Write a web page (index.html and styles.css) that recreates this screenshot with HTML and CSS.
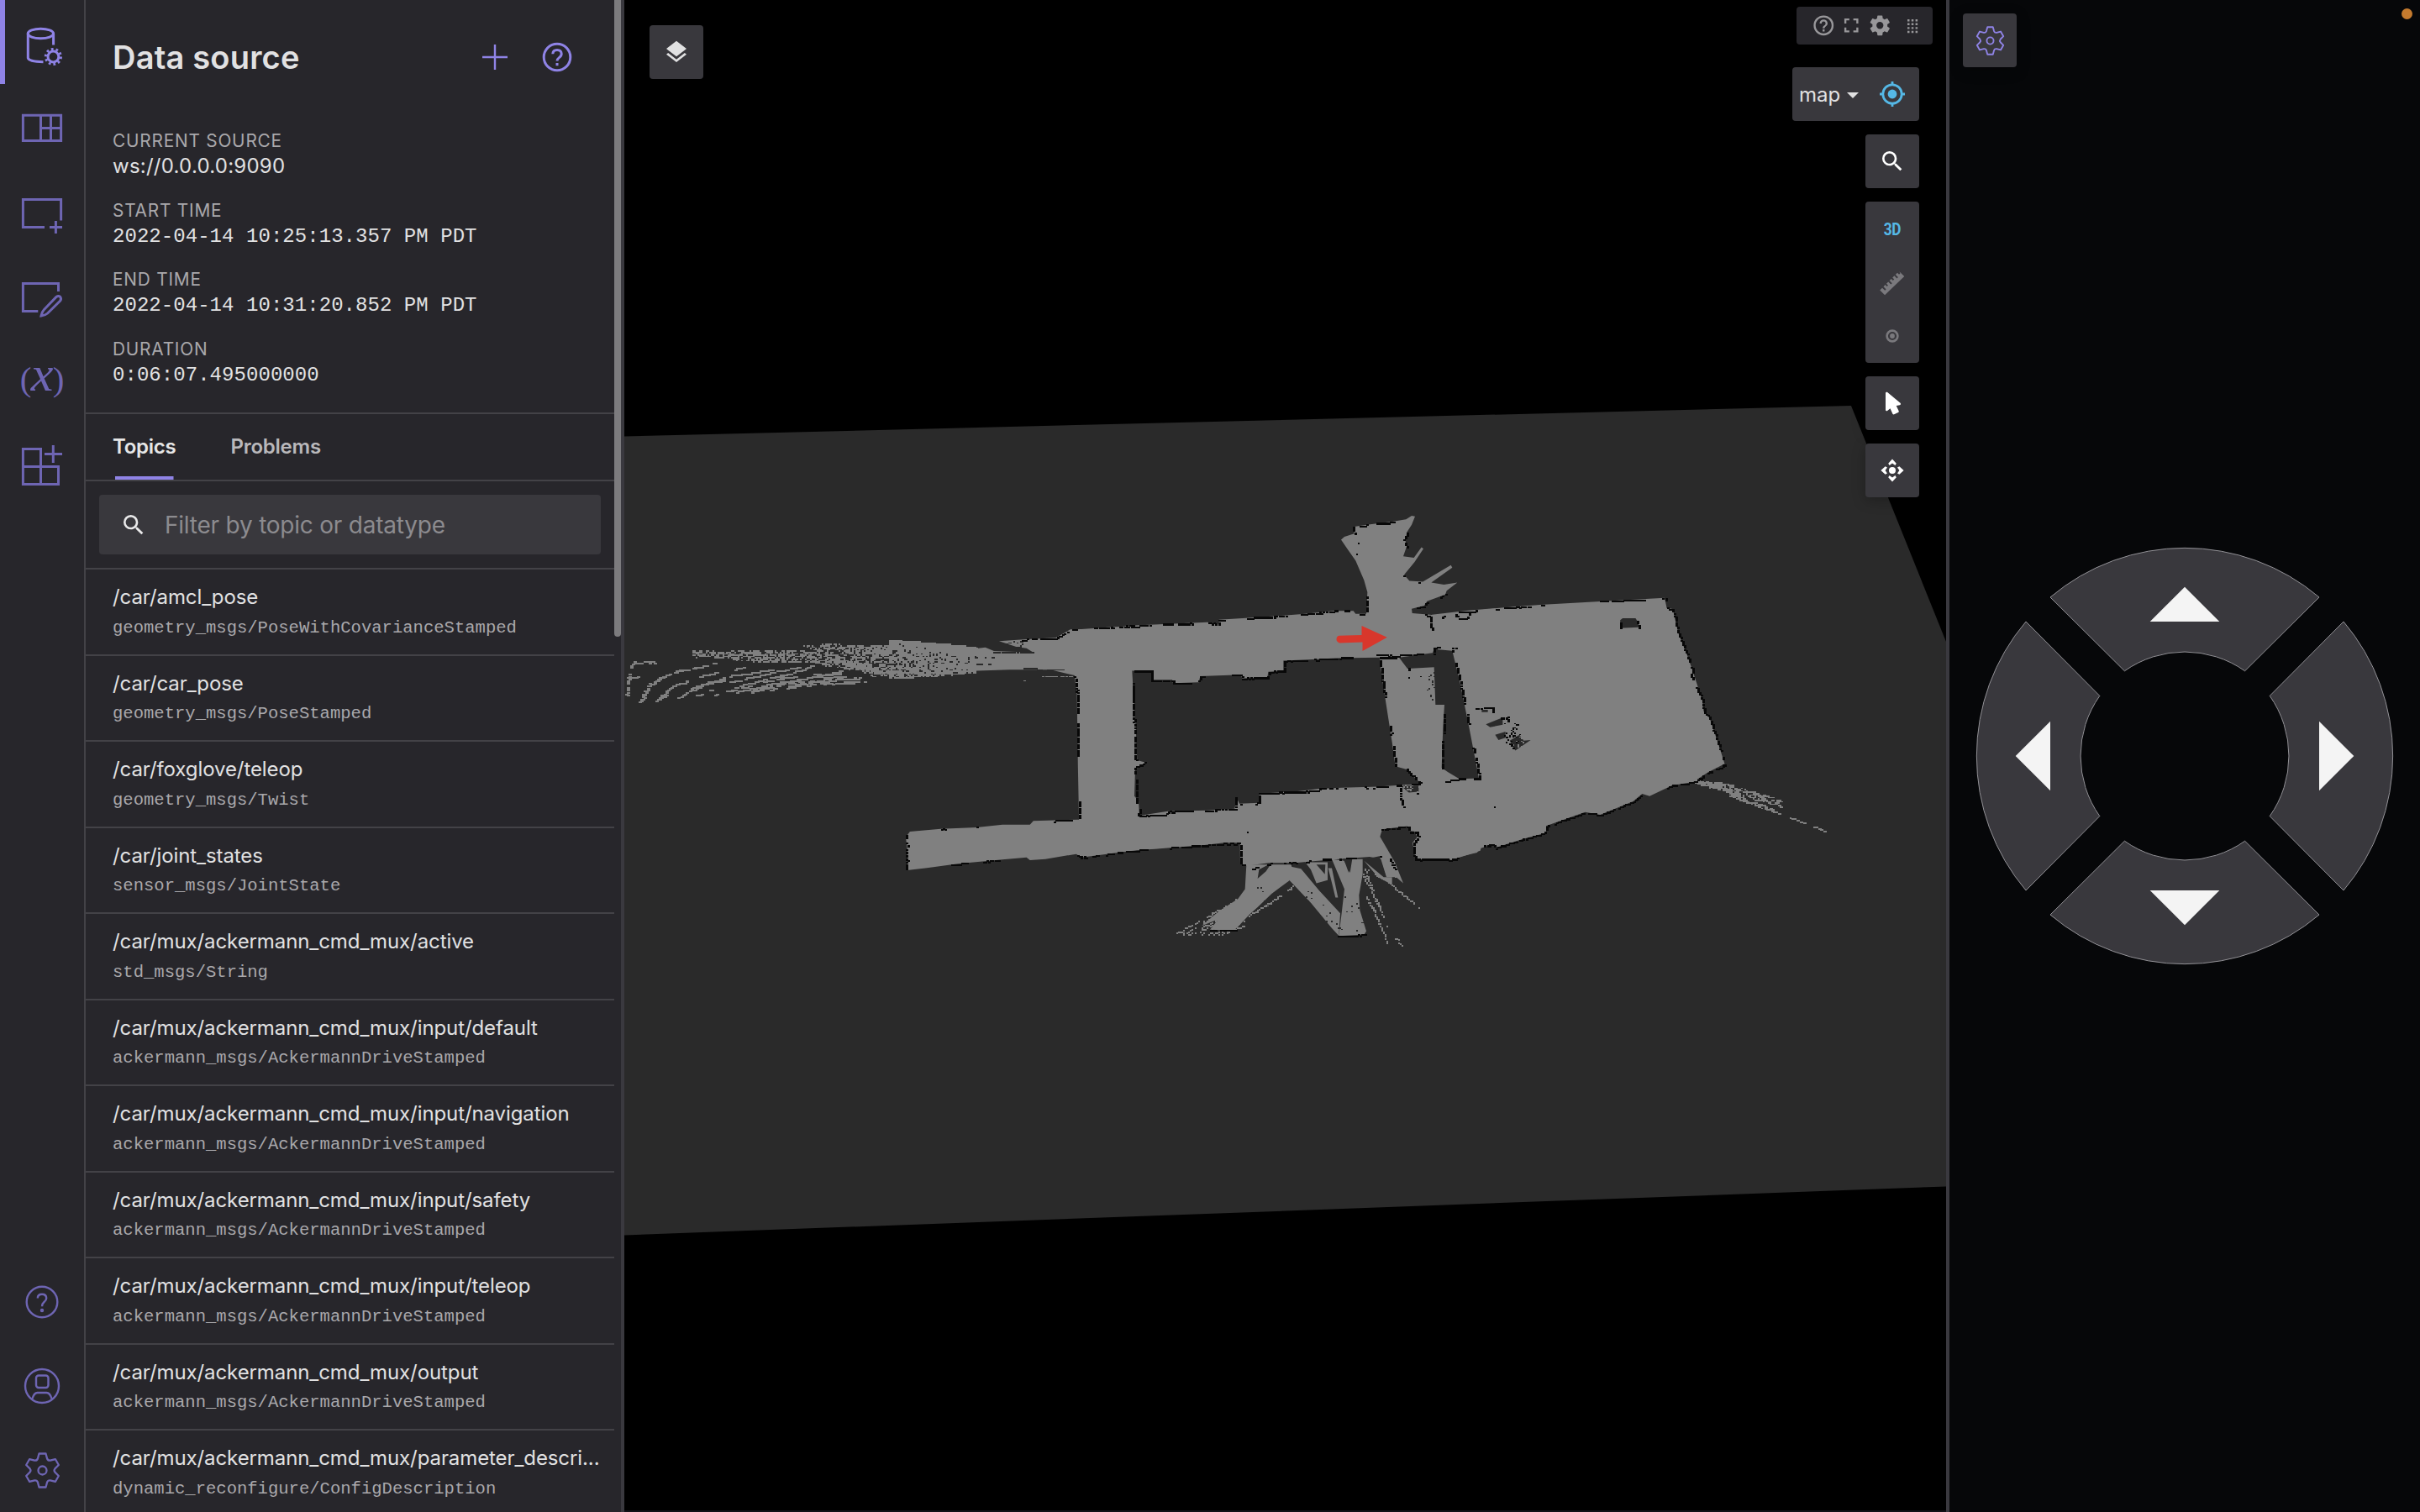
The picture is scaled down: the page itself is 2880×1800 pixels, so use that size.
FILE: index.html
```html
<!DOCTYPE html>
<html lang="en">
<head>
<meta charset="utf-8">
<title>Data source</title>
<link rel="stylesheet" href="styles.css">
</head>
<body>
<svg width="0" height="0" class="defs">
  <defs>
    <symbol id="i-gear" viewBox="-21.5 -21.5 43 43"><path fill="none" stroke="currentColor" stroke-width="2.3" stroke-linejoin="round" d="M-4-20H4L5.6-14Q6.6-11.4 9.32-11.85L15.32-13.46L19.32-6.54L14.92-2.15Q13.2 0 14.92 2.15L19.32 6.54L15.32 13.46L9.32 11.85Q6.6 11.4 5.6 14L4 20H-4L-5.6 14Q-6.6 11.4-9.32 11.85L-15.32 13.46L-19.32 6.54L-14.92 2.15Q-13.2 0-14.92-2.15L-19.32-6.54L-15.32-13.46L-9.32-11.85Q-6.6-11.4-5.6-14Z"/><circle r="5" fill="none" stroke="currentColor" stroke-width="2.3"/></symbol>
    <symbol id="i-search" viewBox="0 0 24 24"><path fill="currentColor" d="M9.5,3A6.5,6.5 0 0,1 16,9.5C16,11.11 15.41,12.59 14.44,13.73L14.71,14H15.5L20.5,19L19,20.5L14,15.5V14.71L13.73,14.44C12.59,15.41 11.11,16 9.5,16A6.5,6.5 0 0,1 3,9.5A6.5,6.5 0 0,1 9.5,3M9.5,5C7,5 5,7 5,9.5C5,12 7,14 9.5,14C12,14 14,12 14,9.5C14,7 12,5 9.5,5Z"/></symbol>
    <symbol id="i-help" viewBox="0 0 24 24"><path fill="currentColor" d="M11,18H13V16H11V18M12,2A10,10 0 0,0 2,12A10,10 0 0,0 12,22A10,10 0 0,0 22,12A10,10 0 0,0 12,2M12,20C7.59,20 4,16.41 4,12C4,7.59 7.59,4 12,4C16.41,4 20,7.59 20,12C20,16.41 16.41,20 12,20M12,6A4,4 0 0,0 8,10H10A2,2 0 0,1 12,8A2,2 0 0,1 14,10C14,12 11,11.75 11,15H13C13,12.75 16,12.5 16,10A4,4 0 0,0 12,6Z"/></symbol>
  </defs>
</svg>
<div class="app">
  <nav class="rail">
    <div class="rail-group">
      <a class="rail-item active"><svg viewBox="0 0 100 100"><ellipse cx="48.4" cy="40" rx="15.2" ry="5.7"/><path d="M33.3 40V69Q34.5 73.3 51.5 73.7M63.6 40V53.5"/><circle cx="63.4" cy="67.5" r="6.4"/><circle cx="63.4" cy="67.5" r="9.1" stroke-dasharray="2.7 3.02"/></svg></a>
      <a class="rail-item"><svg viewBox="0 0 100 100"><path d="M27.4 37.3H72.6V67.6H27.4ZM48.5 37.3V67.6M60.5 37.3V67.6M48.5 52.5H72.6"/></svg></a>
      <a class="rail-item"><svg viewBox="0 0 100 100"><path d="M72.6 62.5V37.4H27.4V70.4H53M66.4 63V78M59 70.4H74"/></svg></a>
      <a class="rail-item"><svg viewBox="0 0 100 100"><path d="M69.5 47V37.4H27.4V70.4H45.3M49 76Q50 71 52.3 68.7L67 53.5Q69.5 51.6 71.8 53.5Q73.4 56 71.5 58.3L56.6 73Q54 75.3 49 76Z"/></svg></a>
      <a class="rail-item fx"><span class="paren">(</span><span class="ex">x</span><span class="paren">)</span></a>
      <a class="rail-item"><svg viewBox="0 0 100 100"><path d="M27.4 34.5H48.5V55.5H69.5V76.6H27.4ZM27.4 55.5H48.5V76.6M63.3 30V51M53 40.5H74"/></svg></a>
    </div>
    <div class="rail-group">
      <a class="rail-item thin"><svg viewBox="0 0 100 100"><circle cx="50" cy="50" r="18.3"/><path d="M44.8 45.5Q44.8 40.8 50 40.8Q55.2 40.8 55.2 45.5Q55.2 48 52.3 50.3Q50 52.2 50 55.2"/><circle cx="50" cy="60" r="1" /></svg></a>
      <a class="rail-item thin"><svg viewBox="0 0 100 100"><circle cx="50" cy="50" r="20"/><rect x="43" y="37.5" width="14.5" height="14.5" rx="3"/><path d="M38.3 65.5Q40.5 58 44.5 58H55.5Q59.5 58 61.7 65.5"/></svg></a>
      <a class="rail-item"><svg class="gear"><use href="#i-gear"/></svg></a>
    </div>
  </nav>

  <aside class="sidebar">
    <div class="sidebar-body">
      <header class="head">
        <h1>Data source</h1>
        <svg class="plus" viewBox="0 0 32 32"><path d="M16 1V31M1 16H31"/></svg>
        <svg class="info" viewBox="0 0 36 36"><circle cx="18" cy="18" r="15.8"/><path d="M12.8 14.2Q13 9.4 18 9.4Q23 9.4 23.2 14Q23.2 16.6 20.4 18.6Q18 20.4 18 22.5"/><path d="M18 25V28.2"/></svg>
      </header>
      <dl class="facts">
        <div><dt>Current source</dt><dd class="sans">ws://0.0.0.0:9090</dd></div>
        <div><dt>Start time</dt><dd>2022-04-14 10:25:13.357 PM PDT</dd></div>
        <div><dt>End time</dt><dd>2022-04-14 10:31:20.852 PM PDT</dd></div>
        <div><dt>Duration</dt><dd>0:06:07.495000000</dd></div>
      </dl>
      <div class="tabs"><span class="tab on">Topics</span><span class="tab">Problems</span></div>
      <div class="filter"><div class="field"><svg><use href="#i-search"/></svg><span>Filter by topic or datatype</span></div></div>
      <ul class="topics">
        <li><b>/car/amcl_pose</b><i>geometry_msgs/PoseWithCovarianceStamped</i></li>
        <li><b>/car/car_pose</b><i>geometry_msgs/PoseStamped</i></li>
        <li><b>/car/foxglove/teleop</b><i>geometry_msgs/Twist</i></li>
        <li><b>/car/joint_states</b><i>sensor_msgs/JointState</i></li>
        <li><b>/car/mux/ackermann_cmd_mux/active</b><i>std_msgs/String</i></li>
        <li><b>/car/mux/ackermann_cmd_mux/input/default</b><i>ackermann_msgs/AckermannDriveStamped</i></li>
        <li><b>/car/mux/ackermann_cmd_mux/input/navigation</b><i>ackermann_msgs/AckermannDriveStamped</i></li>
        <li><b>/car/mux/ackermann_cmd_mux/input/safety</b><i>ackermann_msgs/AckermannDriveStamped</i></li>
        <li><b>/car/mux/ackermann_cmd_mux/input/teleop</b><i>ackermann_msgs/AckermannDriveStamped</i></li>
        <li><b>/car/mux/ackermann_cmd_mux/output</b><i>ackermann_msgs/AckermannDriveStamped</i></li>
        <li><b>/car/mux/ackermann_cmd_mux/parameter_descri...</b><i>dynamic_reconfigure/ConfigDescription</i></li>
      </ul>
    </div>
    <div class="scroll"><div class="thumb"></div></div>
  </aside>

  <main class="scene">
    <svg class="world" viewBox="743 0 1573 1800">
      <path fill="#2a2a2a" d="M743 519.5L2203 483L2316 764V1412.5L743 1470.5Z"/>
      <g fill="#808080">
        <path transform="translate(740 680) scale(.40816 .33333)" d="M1020 278L1060 272 1085 285 1200 290 1180 275 1150 270 1100 250 1180 243 1265 238 1308 208 1340 207 1418 200 1490 196 1568 192V388H1545V355H1490L1492 540 1497 680 1525 683 1515 693 1495 700 1500 820 1507 875 1568 870V990L1520 993 1460 1003 1340 1022 1325 1010 1235 1028 1190 1032 1180 1022 1110 1030 980 1045 890 1060 832 1068V990L828 950 840 930 930 920 1035 915 1110 905 1190 905 1200 892 1333 887 1330 700 1327 440 1320 372 1250 352 1130 352 1020 356Z"/>
        <path transform="translate(1340 580) scale(.33333 .35714)" d="M-4 464L0 462 290 450 330 455 332 442 500 432 640 422 740 412 812 412 820 422H858L862 350 850 310 820 245 790 205 768 175 780 165 815 155 810 132 860 125 950 115 1000 107 1020 95 1032 97 1020 125 1003 150 998 180 1003 195 990 230 1028 235 1055 200 1062 205 1030 250 993 292 1012 312 1060 315 1160 260 1165 268 1090 318 1135 325 1183 318 1145 345 1140 358 1075 380 1065 395 1020 405 1022 420 1085 425 1120 430 1220 415 1280 408 1380 400 1500 393V1152L1420 1172 1320 1200 1310 1190 1270 1195 1265 1212 1160 1243 1145 1235 1035 1241 1025 1190 1042 1165 1035 1148 1010 1145 1005 1130 915 1140 907 1165 960 1250 990 1320 965 1300 930 1300 910 1240 870 1232 760 1240 650 1248 605 1252 510 1252 430 1262 408 1255 407 1185H350L280 1193 120 1205 -4 1213Z"/>
        <path transform="translate(1640 580) scale(.35714 .33333)" d="M180 455L300 440 540 420 740 408 955 395 962 432 982 435 1000 520 1030 600 1048 655 1080 760 1085 800 1105 825 1135 920 1155 988 1100 1018 1050 1053 980 1065 905 1103 880 1095 850 1122 740 1170 690 1160 560 1210 555 1230 400 1285 385 1275 340 1290 330 1305 240 1328 125 1328 115 1270 130 1250 120 1225 100 1150V500Z"/>
        <g transform="translate(1340 580) scale(.33333 .35714)">
          <path d="M430 1258H590L600 1300 520 1355 470 1400 440 1425 400 1465 385 1478 300 1475 330 1440 270 1462 330 1415 400 1372 425 1340Z"/>
          <path d="M575 1262L625 1272 690 1345 765 1420 760 1495 735 1470 660 1385 585 1312Z"/>
          <path d="M735 1240L780 1245 795 1285 805 1240H845V1290L832 1360 835 1410 858 1480 850 1492 760 1496 770 1420 780 1340Z"/>
          <path d="M640 1250H720V1310L680 1320 660 1275Z"/>
          <path d="M722 1270L735 1270 757 1368H748Z"/>
          <path d="M850 1245L920 1300 950 1300V1325L900 1300Z"/>
        </g>
      </g>
      <g fill="#2a2a2a">
        <g transform="translate(1340 580) scale(.33333 .35714)">
          <path d="M22 612H90L92 642H165L168 653 260 650 265 630 410 625 415 637 505 634 508 615 562 612V578L650 575 750 570 905 568 915 640 935 760 950 850 962 930 1000 940 1050 985 1045 990 975 993 900 998 770 1002 690 1005 600 1015 475 1021V1052L405 1055 395 1035 388 1072 290 1077 150 1080 48 1095 45 1045 30 1030 33 940 70 918 40 910 35 800 27 700Z"/>
          <path d="M975 568L1095 552 1100 540 1165 545 1190 640 1225 800 1260 970 1190 972 1150 950 1127 935 1132 800 1137 725H1105L1100 600 1005 605Z"/>
          <path d="M980 995H1045V1015L1010 1018Z"/>
          <path d="M1285 790L1345 768V792L1300 800ZM1318 825L1355 815V835L1330 843ZM1370 845L1405 825 1420 845 1445 843 1390 878ZM1270 742H1292V750H1270Z"/>
          <path d="M475 1275L520 1252 500 1280 470 1305ZM580 1252H610L595 1262ZM680 1258H712L710 1290ZM775 1238H808L800 1285ZM862 1238L905 1230 925 1290 890 1275Z"/>
        </g>
        <path transform="translate(1640 580) scale(.35714 .33333)" d="M807 475L815 468H858L868 485V500L807 503Z"/>
      </g>
      <path id="free" fill="#808080" shape-rendering="crispEdges"/>
      <path id="unknown" fill="#2a2a2a" shape-rendering="crispEdges"/>
      <path id="wall" fill="#080808" shape-rendering="crispEdges"/>
      <path fill="#d8372c" d="M1593.5 756.8L1620.5 756V745L1650.8 758.8L1621.5 775V764.5L1594 765.4Q1590.5 764.5 1590.5 761Q1590.5 757.5 1593.5 756.8Z"/>
    </svg>

    <div class="layers"><svg viewBox="0 0 24 24"><path fill="currentColor" d="M12,16L19.36,10.27L21,9L12,2L3,9L4.63,10.27M12,18.54L4.62,12.81L3,14.07L12,21.07L21,14.07L19.37,12.8L12,18.54Z"/></svg></div>

    <div class="overlay">
      <div class="bar">
        <svg><use href="#i-help"/></svg>
        <svg viewBox="0 0 24 24"><path fill="currentColor" d="M5,5H10V7H7V10H5V5M14,5H19V10H17V7H14V5M17,14H19V19H14V17H17V14M10,17V19H5V14H7V17H10Z"/></svg>
        <svg viewBox="0 0 24 24"><path fill="currentColor" d="M12,15.5A3.5,3.5 0 0,1 8.5,12A3.5,3.5 0 0,1 12,8.5A3.5,3.5 0 0,1 15.5,12A3.5,3.5 0 0,1 12,15.5M19.43,12.97C19.47,12.65 19.5,12.33 19.5,12C19.5,11.67 19.47,11.34 19.43,11L21.54,9.37C21.73,9.22 21.78,8.95 21.66,8.73L19.66,5.27C19.54,5.05 19.27,4.96 19.05,5.05L16.56,6.05C16.04,5.66 15.5,5.32 14.87,5.07L14.5,2.42C14.46,2.18 14.25,2 14,2H10C9.75,2 9.54,2.18 9.5,2.42L9.13,5.07C8.5,5.32 7.96,5.66 7.44,6.05L4.95,5.05C4.73,4.96 4.46,5.05 4.34,5.27L2.34,8.73C2.21,8.95 2.27,9.22 2.46,9.37L4.57,11C4.53,11.34 4.5,11.67 4.5,12C4.5,12.33 4.53,12.65 4.57,12.97L2.46,14.63C2.27,14.78 2.21,15.05 2.34,15.27L4.34,18.73C4.46,18.95 4.73,19.03 4.95,18.95L7.44,17.94C7.96,18.34 8.5,18.68 9.13,18.93L9.5,21.58C9.54,21.82 9.75,22 10,22H14C14.25,22 14.46,21.82 14.5,21.58L14.87,18.93C15.5,18.67 16.04,18.34 16.56,17.94L19.05,18.95C19.27,19.03 19.54,18.95 19.66,18.73L21.66,15.27C21.78,15.05 21.73,14.78 21.54,14.63L19.43,12.97Z"/></svg>
        <svg class="grip" viewBox="0 0 13 18"><path stroke="currentColor" stroke-width="2.4" stroke-dasharray="2.5 2.3" d="M0 2.2H13M0 6.8H13M0 11.4H13M0 16H13"/></svg>
      </div>
      <div class="frame"><span>map</span><svg class="caret" viewBox="0 0 14 7"><path fill="currentColor" d="M0 0H14L7 7Z"/></svg><svg class="aim" viewBox="-16 -16 32 32"><g fill="none" stroke="currentColor" stroke-width="2.8"><circle r="11.2"/><path d="M0-15V-11M0 11V15M-15 0H-11M11 0H15"/></g><circle r="5.4" fill="currentColor"/></svg></div>
      <div class="tool"><svg><use href="#i-search"/></svg></div>
      <div class="tool stack">
        <span class="cell three">3D</span>
        <span class="cell"><svg viewBox="0 0 32 32"><path fill="currentColor" d="M1.2 24.5L4 21.7 7.2 24.8 8.6 23.4 5.5 20.2 7.6 18.1 9.6 20.1 11 18.7 9 16.7 11.2 14.5 14.3 17.6 15.7 16.2 12.6 13.1 14.8 10.9 16.8 12.9 18.2 11.5 16.2 9.5 18.4 7.3 21.5 10.4 22.9 9 19.8 5.9 22 3.8 24 5.8 25.4 4.4 24.4 2.2 30.3 8.1 7.1 30.3Z"/></svg></span>
        <span class="cell"><svg viewBox="0 0 32 32"><circle cx="16" cy="16" r="6.4" fill="none" stroke="currentColor" stroke-width="2.6"/><circle cx="16" cy="16" r="2.9" fill="currentColor"/></svg></span>
      </div>
      <div class="tool"><svg viewBox="0 0 24 24"><path fill="currentColor" d="M13.64,21.97C13.14,22.21 12.54,22 12.31,21.5L10.13,16.76L7.62,18.78C7.45,18.92 7.24,19 7,19A1,1 0 0,1 6,18V3A1,1 0 0,1 7,2C7.24,2 7.47,2.09 7.64,2.23L7.65,2.22L19.14,11.86C19.57,12.22 19.62,12.85 19.27,13.27C19.12,13.45 18.91,13.57 18.7,13.61L15.54,14.23L17.74,18.96C18,19.46 17.76,20.05 17.26,20.28L13.64,21.97Z"/></svg></div>
      <div class="tool"><svg viewBox="-16 -16 32 32"><circle r="4" fill="currentColor"/><path fill="currentColor" d="M0-13.4L4.8-8.2 3.4-6 0-8.4-3.4-6-4.8-8.2ZM0 13.4L4.8 8.2 3.4 6 0 8.4-3.4 6-4.8 8.2ZM-13.6 0L-8.4-4.8-6-3.4-8.4 0-6 3.4-8.4 4.8ZM13.6 0L8.4-4.8 6-3.4 8.4 0 6 3.4 8.4 4.8Z"/></svg></div>
    </div>
  </main>

  <section class="teleop">
    <div class="tool prefs"><svg><use href="#i-gear"/></svg></div>
    <div class="dot"></div>
    <svg class="pad" viewBox="-280 -280 560 560">
      <g id="up"><path fill="#39383d" stroke="#929196" d="M-160-189A247.6 247.6 0 0 1 160-189L71.6-101.2A124 124 0 0 0-71.6-101.2Z"/><path fill="#f4f4f4" d="M0-201.3L41.3-160H-41.3Z"/></g>
      <use href="#up" transform="rotate(90)"/><use href="#up" transform="rotate(180)"/><use href="#up" transform="rotate(270)"/>
    </svg>
  </section>
</div>
<script src="map.js"></script>
</body>
</html>
```
FILE: styles.css
```css
* { box-sizing: border-box; }
body { margin: 0; background: #000; font-family: Inter, "Liberation Sans", sans-serif; color: #e1e1e2; overflow: hidden; }
.defs { position: absolute; }
.app { display: flex; width: 2880px; height: 1800px; }

.rail { width: 102px; display: flex; flex-direction: column; justify-content: space-between; background: #27262b; border-right: 2px solid #434247; color: #6e65b3; }
.rail-item { display: flex; align-items: center; justify-content: center; width: 100px; height: 100px; }
.rail-item svg { width: 100px; height: 100px; fill: none; stroke: currentColor; stroke-width: 3; }
.rail-item.thin svg { stroke-width: 2.4; }
.rail-item svg.gear { width: 43px; height: 43px; stroke: none; }
.rail-item.active { color: #8f83e6; box-shadow: inset 6px 0 #8f83e6; }
.fx { font-family: "Liberation Serif", serif; line-height: 1; padding-top: 2px; }
.fx .paren { font-size: 41px; width: 9px; display: flex; justify-content: center; }
.fx .ex { font-size: 60px; font-style: italic; width: 30px; text-align: center; padding-bottom: 13px; }

.sidebar { width: 637px; display: flex; background: #27262b; }
.sidebar-body { width: 629px; height: 1798px; overflow: hidden; }
.scroll { width: 8px; height: 1800px; }
.thumb { height: 758px; border-radius: 0 0 4px 4px; background: #7c7b7e; }
.head { height: 153px; padding: 44px 50px 0 32px; display: flex; align-items: flex-start; color: #8f83e6; }
.head h1 { margin: 0; flex: 1; font-size: 38px; line-height: 48px; font-weight: 600; color: #e1e1e2; letter-spacing: .2px; }
.head svg { fill: none; stroke: currentColor; }
.plus { width: 32px; height: 32px; stroke-width: 2.4; margin: 8px 40px 0 0; }
.info { width: 36px; height: 36px; stroke-width: 3; margin-top: 6px; }
.facts { margin: 0; padding: 0 32px; height: 338px; }
.facts div { height: 82.6px; }
dt { font-size: 20.8px; line-height: 30px; letter-spacing: .8px; text-transform: uppercase; color: #a9a8ab; }
dd { margin: 0; font: 24px/32px "Liberation Mono", monospace; letter-spacing: .05px; }
dd.sans { font-family: Inter, sans-serif; line-height: 30px; letter-spacing: .25px; }
.tabs { height: 82px; border-top: 2px solid #434247; border-bottom: 2px solid #434247; padding: 0 32px; display: flex; gap: 65px; font-size: 24px; font-weight: 600; line-height: 78px; letter-spacing: -.25px; color: #b9b8bb; }
.tab.on { color: #e6e6e7; background: linear-gradient(#8f83e6, #8f83e6) 2.5px 100% / 69.5px 4px no-repeat; }
.filter { height: 105px; padding: 16px; border-bottom: 2px solid #434247; }
.field { height: 71px; background: #39383d; border-radius: 4px; display: flex; align-items: center; padding-left: 24.5px; gap: 21.5px; font-size: 28px; letter-spacing: -.22px; color: #8c8b8f; }
.field svg { width: 32px; height: 32px; color: #e9e9ea; }
.topics { margin: 0; padding: 0; list-style: none; }
.topics li { height: 102.5px; padding: 17px 16px 0 32px; border-bottom: 2px solid #434247; }
.topics b, .topics i { display: block; font-weight: 400; font-style: normal; white-space: nowrap; }
.topics b { font-size: 24px; line-height: 32px; letter-spacing: -.09px; }
.topics i { font: 20.55px/30px "Liberation Mono", monospace; color: #a9a8ab; margin-top: 5.5px; }

.scene { width: 1581px; position: relative; background: #000; border: solid #3a393f; border-width: 0 4px; }
.scene::after { content: ""; position: absolute; left: 0; right: 0; bottom: 0; height: 2px; background: #121217; }
.world { position: absolute; inset: 0; width: 1573px; height: 1800px; }
.tool, .layers { width: 64px; height: 64px; border-radius: 4px; background: #39383d; display: flex; align-items: center; justify-content: center; color: #fff; box-shadow: 0 4px 16px rgba(0,0,0,.25); }
.tool svg, .layers svg { width: 32px; height: 32px; }
.layers { position: absolute; left: 30px; top: 30px; color: #e1e1e2; }
.overlay { position: absolute; top: 8px; right: 16px; display: flex; flex-direction: column; align-items: flex-end; }
.overlay > * { margin: 0 16px 16px 0; }
.overlay .bar { margin: 0 0 27px; width: 162px; height: 45px; border-radius: 4px; background: #27262b; color: #98979a; display: flex; align-items: center; padding-left: 17.5px; }
.bar svg { width: 28.5px; height: 28.5px; margin-right: 5px; }
.bar svg.grip { width: 13px; height: 18px; margin: 0 0 0 14px; }
.frame { width: 151px; height: 64px; border-radius: 4px; background: #39383d; display: flex; align-items: center; padding-left: 8px; font-size: 24px; box-shadow: 0 4px 16px rgba(0,0,0,.25); }
.frame .caret { width: 14px; height: 7px; margin: 2px 0 0 8px; }
.frame .aim { width: 32px; height: 32px; margin-left: 24px; color: #55b8e6; }
.stack { height: 192px; flex-direction: column; color: #7a797d; }
.cell { flex: 1; display: flex; align-items: center; }
.three { color: #55b8e6; font: 700 20px Roboto, sans-serif; letter-spacing: -.4px; transform: scaleX(.86); padding-top: 1px; }

.teleop { flex: 1; position: relative; background: #060709; padding: 16px; display: flex; flex-direction: column; }
.prefs { color: #8f83e6; }
.prefs svg { width: 35px; height: 35px; }
.dot { position: absolute; right: 9.5px; top: 9.5px; width: 13px; height: 13px; border-radius: 50%; background: #c47a2e; }
.pad { position: absolute; left: 0; top: 620px; width: 560px; height: 560px; }
```
FILE: map.js
```js
// Occupancy-grid detail: wall cells and sparse laser returns.
let seed = 7;
const rnd = () => (seed = (seed * 1664525 + 1013904223) % 4294967296) / 4294967296;
const T = {
  w: (x, y) => [740 + x / 2.45, 680 + y / 3],
  m: (x, y) => [1340 + x / 3, 580 + y / 2.8],
  e: (x, y) => [1640 + x / 2.8, 580 + y / 3]
};
const out = { free: [], unknown: [], wall: [] };
const cell = (k, x, y, w = 2, h = 1.6) => {
  x = Math.round(x / 2) * 2;
  y = Math.round(y / 1.6) * 1.6;
  out[k].push(`M${x} ${y.toFixed(1)}h${w}v${h}h${-w}z`);
};
// Walk a polyline, dropping cells in runs.
function walk(kind, t, pts, density, jitter = 0, w = 2, h = 2) {
  let on = true;
  const p = pts.split(' ').map(s => T[t](...s.split(',').map(Number)));
  for (let i = 1; i < p.length; i++) {
    const [ax, ay] = p[i - 1], [bx, by] = p[i];
    const n = Math.max(1, Math.round(Math.hypot(bx - ax, by - ay) / 2));
    for (let s = 0; s < n; s++) {
      if (rnd() < .3) on = rnd() < density;
      if (on) cell(kind, ax + (bx - ax) * s / n + (rnd() - .5) * jitter, ay + (by - ay) * s / n + (rnd() - .5) * jitter, w, h);
    }
  }
}
// Fill a band between two edges with scattered cells.
function band(kind, t, x0, a0, b0, x1, a1, b1, d0, d1) {
  const [X0, A0] = T[t](x0, a0), [X1, A1] = T[t](x1, a1), B0 = T[t](x0, b0)[1], B1 = T[t](x1, b1)[1];
  for (let x = X0; x < X1; x += 2) {
    const f = (x - X0) / (X1 - X0), top = A0 + (A1 - A0) * f, bot = B0 + (B1 - B0) * f;
    for (let y = top; y < bot; y += 1.6) if (rnd() < d0 + (d1 - d0) * f) cell(kind, x, y, rnd() < .4 ? 4 : 2);
  }
}
// Corridor sweep on the far left
[
  '10,470 14,400 20,345 35,323 60,330', '65,322 100,326', '20,385 45,372', '18,365 45,345',
  '52,467 62,430 80,395 150,360 280,325', '60,455 75,410 110,380 170,350',
  '100,460 140,415 220,375 360,340', '110,455 140,430', '160,453 210,412 320,372 440,350',
  '170,445 240,400 300,388', '215,445 300,400 420,365 520,340', '270,440 350,405 470,370 560,335',
  '285,435 330,420 440,385 600,360', '330,432 440,400 520,385 640,360', '375,430 460,405 600,378 650,375',
  '380,425 480,395 640,355', '430,422 540,395 660,375', '480,415 580,390', '540,408 620,385 700,380', '590,402 690,392', '640,400 710,392'
].forEach(s => walk('free', 'w', s, .78, 1, 4, 2));
for (let i = 0; i < 9; i++) walk('free', 'w', `${580 + i * 12},${300 + i * 3} ${650 + i * 12},${328 + i * 3} ${740 + i * 7},${378 - i * 3}`, .6, 1.5, 3, 1.6);
band('free', 'w', 205, 283, 308, 320, 288, 308, .6, .5);
band('free', 'w', 320, 283, 320, 560, 285, 328, .55, .55);
band('free', 'w', 530, 262, 275, 640, 260, 278, .3, .5);
band('free', 'w', 560, 280, 328, 780, 262, 372, .48, .52);
band('free', 'w', 640, 262, 285, 780, 262, 300, .4, .5);
band('free', 'w', 778, 243, 384, 900, 262, 375, .68, .72);
band('free', 'w', 900, 262, 375, 1030, 272, 360, .74, .88);
band('free', 'w', 780, 243, 275, 1030, 270, 300, .9, 1);
walk('free', 'w', '1170,388 1230,375 1320,374', .7, 1, 3, 1.6);
walk('unknown', 'w', '1085,288 1200,290', .6, 0, 3, 1.6);
walk('unknown', 'w', '1130,346 1290,350', .6, 0, 3, 1.6);
band('unknown', 'w', 1030, 285, 350, 1090, 300, 345, .1, .02);
band('unknown', 'w', 1110, 250, 275, 1170, 248, 275, .3, .2);
// Walls
[
  ['w', '1165,243 1265,238 1308,208 1340,207 1418,200 1490,196 1568,190', .6],
  ['w', '1320,372 1327,440 1328,600 1332,885', .75], ['w', '1490,358 1492,540 1497,680', .75],
  ['w', '1525,683 1495,700 1500,780 1500,820 1508,875 1530,873', .7],
  ['w', '1490,357 1543,355 1545,388 1568,388', .8],
  ['w', '1333,887 1200,892 1190,905 1110,905 1035,912 925,920', .35], ['w', '830,940 830,1068', .85],
  ['w', '960,1048 1100,1030 1180,1022 1190,1032 1235,1028 1325,1010 1340,1022 1460,1003 1520,993 1568,990', .4],
  ['m', '0,462 290,450 330,455 332,442 500,432 640,422 740,412 812,412 820,422 858,422', .6],
  ['m', '858,410 862,340', .6], ['m', '815,155 810,132 860,125 950,115 1000,107', .55],
  ['m', '1003,150 990,180 1003,195 990,230 1000,233', .5], ['m', '993,292 1012,312 1050,315', .7],
  ['m', '1140,358 1075,380 1065,395 1020,405 1022,420', .7], ['m', '1065,423 1083,430 1090,480', .95],
  ['m', '1130,430 1170,420 1190,438 1220,435 1222,415 1180,415', .6],
  ['m', '1220,415 1280,408 1380,400 1500,393', .6],
  ['m', '22,700 22,612 90,612 92,642 165,642 168,653 260,650 265,630 410,625 415,637 505,634 508,615 562,612 562,578 650,575 750,570 905,562', .7],
  ['m', '895,557 970,562', .95], ['m', '905,568 965,566', .95], ['m', '970,560 1095,552 1098,535 1120,530', .8],
  ['m', '1150,535 1190,540', .8], ['m', '905,568 915,640 935,760 950,850 962,930', .7],
  ['m', '1165,545 1190,640 1225,800 1262,970 1190,972', .8], ['m', '1190,972 1135,980', .9],
  ['m', '1127,935 1132,800 1137,725 1105,720', .5], ['m', '1005,605 1070,605 1095,600', .5],
  ['m', '1000,940 1050,985 975,993 900,998 770,1002 690,1000 685,1010 600,1015 475,1021 475,1052 405,1055', .65],
  ['m', '388,1030 388,1072 290,1077 150,1080 140,1090 48,1095 45,1045', .7],
  ['m', '978,1000 980,1035 990,1068', .95], ['m', '1000,1018 1045,1020', .7],
  ['m', '0,1213 120,1203 280,1193 350,1187 407,1187 408,1255 425,1260', .65],
  ['m', '915,1140 1005,1130 1012,1148 1035,1148 1042,1165 1025,1190 1030,1241 1145,1237', .75],
  ['m', '1145,1240 1160,1243', 1], ['m', '1160,1243 1265,1212 1270,1197 1310,1190 1320,1200 1500,1150', .7],
  ['m', '300,1475 395,1478', .5], ['m', '755,1496 858,1490', .7], ['m', '565,1250 610,1250', .8],
  ['m', '645,1246 690,1243', .8], ['m', '700,1240 730,1240', .7], ['m', '760,1236 910,1230', .7],
  ['m', '450,1270 520,1252', .5], ['m', '940,1240 985,1310', .35],
  ['m', '1245,737 1270,737', .8], ['m', '1280,732 1307,732 1307,752', .95], ['m', '1340,768 1360,765 1360,780', .9],
  ['m', '1355,830 1385,875 1415,850 1445,843', .7],
  ['e', '740,408 955,395 962,432 982,435 1000,520 1030,600 1048,655 1040,668 1080,760 1085,800 1105,825 1135,920 1155,985', .7],
  ['e', '1155,990 1100,1018 1050,1053 980,1065 905,1103 880,1095 850,1122 740,1170 690,1160 560,1210 555,1230', .7],
  ['e', '808,503 808,475', .9], ['e', '868,503 862,472', .8]
].forEach(a => walk('wall', a[0], a[1], a[2], .6, 2.5, 2.2));
// Thin beams
[
  '850,1270 905,1398', '855,1300 900,1385', '850,1355 880,1400 985,1527', '880,1400 935,1522', '845,1290 925,1440',
  '865,1275 950,1325 1050,1405', '930,1260 985,1320', '915,1250 965,1300', '490,1402 600,1325', '440,1425 520,1380'
].forEach(s => walk('free', 'm', s, .72, .8));
for (let i = 0; i < 8; i++) walk('free', 'm', `${180 + i * 22},${1487 + (i % 3) * 2} ${400 + i * 5},${1372 + i * 12}`, .75, 1.5);
for (let i = 0; i < 70; i++) cell('unknown', ...T.m(440 + rnd() * 410, 1330 + rnd() * 150));
for (let i = 0; i < 28; i++) cell('wall', ...T.m(1345 + rnd() * 60, 785 + rnd() * 65));
for (let i = 0; i < 10; i++) cell('free', ...T.m(1375 + rnd() * 40, 830 + rnd() * 35));
for (let i = 0; i < 14; i++) cell('unknown', ...T.m(1075 + rnd() * 25, 610 + rnd() * 100));
for (let i = 0; i < 22; i++) cell('free', ...T.m(978 + rnd() * 65, 990 + rnd() * 30));
[[430, 1150], [1312, 1066], [827, 187], [820, 220], [1008, 635], [1048, 630]].forEach(p => cell('wall', ...T.m(...p)));
band('free', 'e', 1050, 1045, 1056, 1170, 1060, 1092, .95, .8);
band('free', 'e', 1170, 1062, 1092, 1340, 1118, 1142, .6, .5);
band('free', 'e', 1170, 1092, 1102, 1320, 1150, 1162, .7, .55);
walk('free', 'e', '1290,1145 1425,1200', .8);
walk('free', 'e', '1450,1210 1500,1232 1515,1245', .8);
for (const k in out) document.getElementById(k).setAttribute('d', out[k].join(''));
```
